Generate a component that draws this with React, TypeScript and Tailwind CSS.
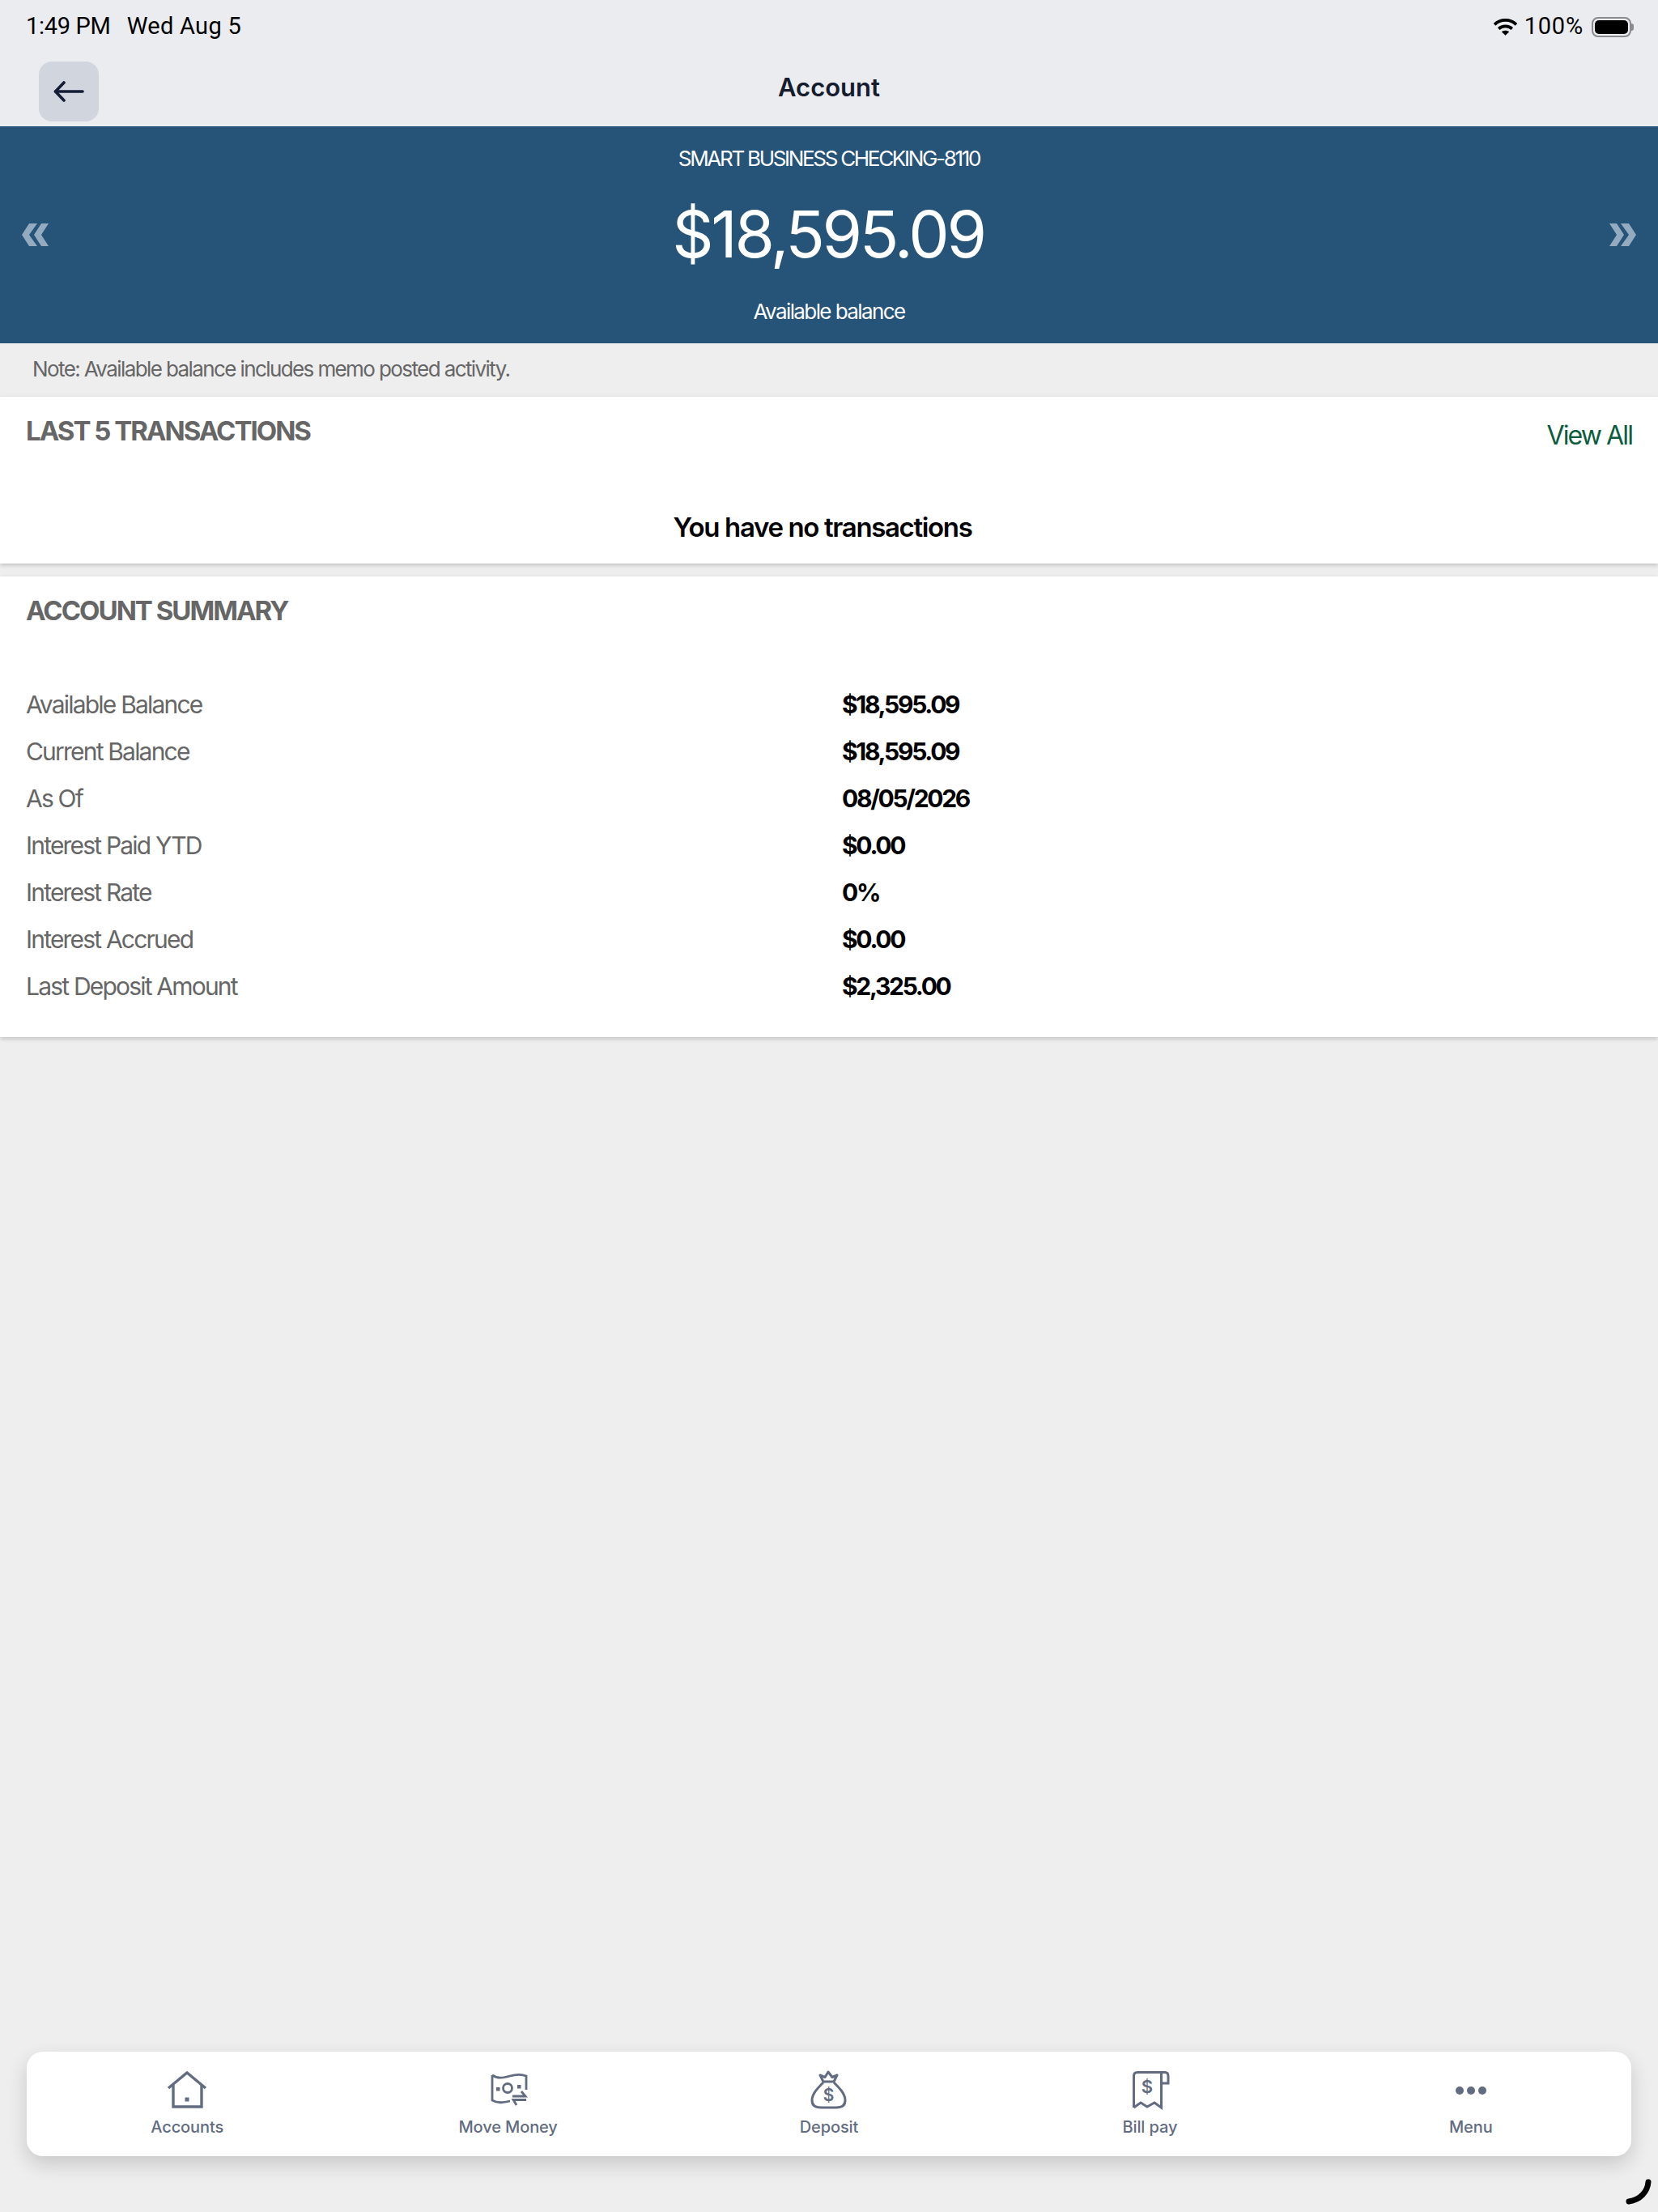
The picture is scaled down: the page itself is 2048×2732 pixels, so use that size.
import React from 'react';

const rows = [
  ['Available Balance', '$18,595.09'],
  ['Current Balance', '$18,595.09'],
  ['As Of', '08/05/2026'],
  ['Interest Paid YTD', '$0.00'],
  ['Interest Rate', '0%'],
  ['Interest Accrued', '$0.00'],
  ['Last Deposit Amount', '$2,325.00'],
];

const ICON = '#626c80';

const HomeIcon = () => (
  <svg width="70" height="64" viewBox="-3 0 70 64" fill="none" stroke={ICON} strokeWidth="3.4">
    <path d="M9 29 L32 10 L55 29" />
    <path d="M15 25 V52 H50 V25" />
    <rect x="29.5" y="40.5" width="5" height="5" fill={ICON} stroke="none" />
  </svg>
);

const MoveMoneyIcon = () => (
  <svg width="70" height="64" viewBox="-2 0 70 64" fill="none" stroke={ICON} strokeWidth="2.8">
    <path d="M13 13 C20 18 28 16 35 14 C42 12 48 11 55 14 V31" />
    <path d="M13 13 V44 C20 48 26 47 35 45" />
    <circle cx="32" cy="29" r="5.5" />
    <rect x="18" y="28" width="4.5" height="4.5" fill={ICON} stroke="none" />
    <rect x="44" y="25" width="4.5" height="4.5" fill={ICON} stroke="none" />
    <path d="M49 33 L54 39 H38" />
    <path d="M55 43.500 H39 L43 50" />
  </svg>
);

const DepositIcon = () => (
  <svg width="70" height="64" viewBox="-1 0 70 64" fill="none" stroke={ICON} strokeWidth="3">
    <path d="M27 21 L23 13 L29 15.500 L33 9 L38 15.500 L44 13 L40 21 Z" strokeLinejoin="round" />
    <path d="M27 22 C20 29 13 36 13 44 C13 51 18 53 24 53 H43 C49 53 54 51 54 44 C54 36 47 29 40 22" />
    <text x="33.500" y="45" textAnchor="middle" fontSize="21" fontWeight="600" fill={ICON} stroke="none" fontFamily="Inter, sans-serif">$</text>
  </svg>
);

const BillIcon = () => (
  <svg width="70" height="64" viewBox="-1 0 70 64" fill="none" stroke={ICON} strokeWidth="3">
    <path d="M14.500 53 V14 C14.500 11 16 9.500 19 9.500 H53 C56 9.500 57 11 57 14 V23 H48.500" />
    <path d="M48.500 10 V53 L40 47 L31 52 L23 47 L14.500 53" />
    <text x="31" y="35" textAnchor="middle" fontSize="22" fontWeight="600" fill={ICON} stroke="none" fontFamily="Inter, sans-serif">$</text>
  </svg>
);

const MenuIcon = () => (
  <svg width="70" height="64" viewBox="0 0 70 64" fill={ICON}>
    <circle cx="21" cy="32" r="5" />
    <circle cx="35" cy="32" r="5" />
    <circle cx="49" cy="32" r="5" />
  </svg>
);

const tabs = [
  { label: 'Accounts', icon: <HomeIcon /> },
  { label: 'Move Money', icon: <MoveMoneyIcon /> },
  { label: 'Deposit', icon: <DepositIcon /> },
  { label: 'Bill pay', icon: <BillIcon /> },
  { label: 'Menu', icon: <MenuIcon /> },
];

const Chevrons = ({ flip }: { flip?: boolean }) => (
  <svg width="33" height="28" viewBox="0 0 33 28" fill="#93aabf" className={flip ? 'rotate-180' : ''}>
    <path d="M9 0 H19 L9 14 L19 28 H9 L0 14 Z" />
    <path d="M24 0 H33 L24 14 L33 28 H24 L15 14 Z" />
  </svg>
);

export default function App() {
  return (
    <div className="relative flex flex-col h-[2732px] w-[2048px] bg-[#eeeeee] font-['Inter',sans-serif] overflow-hidden">
      <header className="h-[156px] bg-[#ebecf0] shrink-0">
        <div className="flex items-center justify-between h-[64px] pt-[2px] pl-[32px] pr-[30px] font-['Roboto',sans-serif] text-[29px] text-black">
          <div className="flex gap-[20px]">
            <span className="tracking-[-0.3px]">1:49 PM</span>
            <span className="tracking-[0.3px]">Wed Aug 5</span>
          </div>
          <div className="flex items-center gap-[8px]">
            <svg width="31" height="25" viewBox="0 0 30 24" fill="none" stroke="#000" strokeWidth="3.6">
              <path d="M2 9 C9 2 21 2 28 9" />
              <path d="M7 14 C11 10 19 10 23 14" />
              <path d="M15 22 L10.500 17.500 C13 15.500 17 15.500 19.500 17.500 Z" fill="#000" stroke="none" />
            </svg>
            <span className="tracking-[0.8px]">100%</span>
            <div className="ml-[2px] flex items-center">
              <div className="w-[49px] h-[25px] rounded-[8px] border-2 border-[#8a8a8e] p-[2px]">
                <div className="w-full h-full rounded-[5px] bg-black" />
              </div>
              <div className="w-[3px] h-[9px] rounded-r-full bg-[#8a8a8e]" />
            </div>
          </div>
        </div>
        <div className="relative h-[92px] flex items-center justify-center">
          <button className="absolute left-[48px] top-[12px] w-[74px] h-[74px] rounded-[16px] bg-[#d1d5de] flex items-center justify-center">
            <svg width="38" height="26" viewBox="0 0 38 26" fill="none" stroke="#141c36" strokeWidth="3.6" strokeLinecap="round" strokeLinejoin="round">
              <path d="M2.500 13 H36" />
              <path d="M13 2 L2.500 13 L13 24" />
            </svg>
          </button>
          <h1 className="text-[31px] font-semibold text-[#141c2e] -mt-[4px]">Account</h1>
        </div>
      </header>

      <section className="h-[268px] bg-[#265378] shrink-0 flex items-center justify-between px-[27px] text-white">
        <Chevrons />
        <div className="flex flex-col items-center">
          <div className="text-[26px] tracking-[-2.3px] leading-[36px]">SMART BUSINESS CHECKING-8110</div>
          <div className="text-[80px] tracking-[-3.4px] leading-[100px] mt-[25px] -ml-[2px]">$18,595.09</div>
          <div className="text-[26px] tracking-[-1.6px] leading-[36px] mt-[28px]">Available balance</div>
        </div>
        <Chevrons flip />
      </section>

      <div className="h-[66px] shrink-0 pl-[40px] pt-[14px] text-[26px] tracking-[-1.6px] leading-[36px] text-[#666666]">
        Note: Available balance includes memo posted activity.
      </div>

      <section className="h-[206px] shrink-0 bg-white shadow-[0_2px_5px_rgba(0,0,0,0.2)] relative">
        <div className="flex justify-between items-start pl-[32px] pr-[32px]">
          <h2 className="text-[33px] font-bold tracking-[-2px] leading-[44px] pt-[20px] text-[#666666]">LAST 5 TRANSACTIONS</h2>
          <a className="text-[32px] tracking-[-1.9px] leading-[44px] pt-[26px] text-[#0b5d3e]">View All</a>
        </div>
        <p className="text-center pr-[16px] mt-[69px] text-[33px] font-semibold tracking-[-1.35px] leading-[44px] text-black">You have no transactions</p>
      </section>

      <section className="mt-[16px] h-[569px] shrink-0 bg-white shadow-[0_2px_5px_rgba(0,0,0,0.2)] pl-[32px] relative">
        <h2 className="text-[33px] font-bold tracking-[-2px] leading-[44px] pt-[20px] text-[#666666]">ACCOUNT SUMMARY</h2>
        <dl className="mt-[65px]">
          {rows.map(([label, value]) => (
            <div key={label} className="flex items-center h-[58px] text-[30px]">
              <dt className="w-[1008px] tracking-[-1.8px] text-[#666666]">{label}</dt>
              <dd className="font-bold tracking-[-2.3px] text-black">{value}</dd>
            </div>
          ))}
        </dl>
      </section>

      <nav className="mt-auto mb-[69px] mx-[33px] h-[129px] rounded-[20px] bg-white shadow-[0_10px_25px_rgba(0,0,0,0.16)] grid grid-cols-5">
        {tabs.map((tab) => (
          <div key={tab.label} className="flex flex-col items-center pt-[16px]">
            <div className="h-[64px] flex items-center justify-center">{tab.icon}</div>
            <span className="-mt-[1px] text-[20px] font-medium tracking-[-0.1px] leading-[28px] text-[#626c80]">{tab.label}</span>
          </div>
        ))}
      </nav>

      <svg className="absolute left-[2006px] top-[2690px]" width="36" height="36" viewBox="0 0 36 36" fill="none" stroke="#000" strokeWidth="7" strokeLinecap="round">
        <path d="M30 5 C29 17 20 27 6 29" />
      </svg>
    </div>
  );
}
